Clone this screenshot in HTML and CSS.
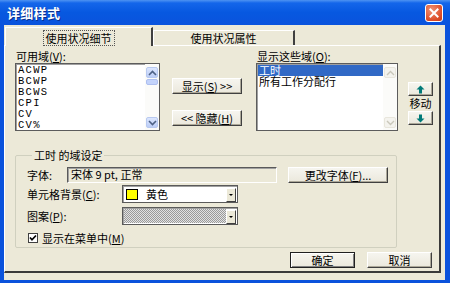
FILE: index.html
```html
<!DOCTYPE html>
<html lang="zh-CN">
<head>
    <meta charset="UTF-8">
    <title>详细样式</title>
    <link rel="stylesheet" href="styles.css">
</head>
<body>
    <div class="window">
        <div class="titlebar">
            <span class="title">详细样式</span>
            <span class="close">
                <svg width="18" height="18" viewBox="0 0 18 18">
                    <path d="M5 5 L13 13 M13 5 L5 13" stroke="#fff" stroke-width="2.2" stroke-linecap="square"/>
                </svg>
            </span>
        </div>

        <div class="client">
            <div class="tabs">
                <div class="tab active"><span class="focus">使用状况细节</span></div>
                <div class="tab">使用状况属性</div>
            </div>

            <div class="panel">
                <div class="fields">
                    <div class="col">
                        <div class="label">可用域(<u>V</u>):</div>
                        <div class="listbox">
                            <ul class="items mono">
                                <li>ACWP</li>
                                <li>BCWP</li>
                                <li>BCWS</li>
                                <li>CPI</li>
                                <li>CV</li>
                                <li>CV%</li>
                            </ul>
                            <div class="scrollbar">
                                <span class="sb-btn">
                                    <svg width="9" height="6" viewBox="0 0 9 6"><path d="M1 5 L4.5 1.5 L8 5" fill="none" stroke="#4d6185" stroke-width="1.6"/></svg>
                                </span>
                                <span class="sb-thumb"></span>
                                <span class="sb-track"></span>
                                <span class="sb-btn">
                                    <svg width="9" height="6" viewBox="0 0 9 6"><path d="M1 1 L4.5 4.5 L8 1" fill="none" stroke="#4d6185" stroke-width="1.6"/></svg>
                                </span>
                            </div>
                        </div>
                    </div>

                    <div class="mid">
                        <div class="btn">显示(<u>S</u>) &gt;&gt;</div>
                        <div class="btn">&lt;&lt; 隐藏(<u>H</u>)</div>
                    </div>

                    <div class="col">
                        <div class="label">显示这些域(<u>O</u>):</div>
                        <div class="listbox">
                            <ul class="items">
                                <li class="selected">工时</li>
                                <li>所有工作分配行</li>
                            </ul>
                            <div class="scrollbar disabled">
                                <span class="sb-btn">
                                    <svg width="9" height="6" viewBox="0 0 9 6"><path d="M1 5 L4.5 1.5 L8 5" fill="none" stroke="#c9c7ba" stroke-width="1.4"/></svg>
                                </span>
                                <span class="sb-track"></span>
                                <span class="sb-btn">
                                    <svg width="9" height="6" viewBox="0 0 9 6"><path d="M1 1 L4.5 4.5 L8 1" fill="none" stroke="#c9c7ba" stroke-width="1.4"/></svg>
                                </span>
                            </div>
                        </div>
                    </div>

                    <div class="move">
                        <div class="btn icon">
                            <svg width="9" height="9" viewBox="0 0 9 9"><path d="M4.5 0.5 L8.5 4.5 L6 4.5 L6 8.5 L3 8.5 L3 4.5 L0.5 4.5 Z" fill="#007a78"/></svg>
                        </div>
                        <div class="move-label">移动</div>
                        <div class="btn icon">
                            <svg width="9" height="9" viewBox="0 0 9 9"><path d="M4.5 8.5 L8.5 4.5 L6 4.5 L6 0.5 L3 0.5 L3 4.5 L0.5 4.5 Z" fill="#007a78"/></svg>
                        </div>
                    </div>
                </div>

                <fieldset class="group">
                    <legend>工时 的域设定</legend>

                    <div class="row font-row">
                        <span class="row-label short">字体:</span>
                        <span class="readonly">宋体 9 pt, 正常</span>
                        <div class="btn wide">更改字体(<u>F</u>)...</div>
                    </div>

                    <div class="row combo-row">
                        <span class="row-label">单元格背景(<u>C</u>):</span>
                        <div class="combo">
                            <span class="combo-value"><span class="swatch"></span>黄色</span>
                            <span class="combo-btn"><span class="caret"></span></span>
                        </div>
                    </div>

                    <div class="row combo-row pattern-row">
                        <span class="row-label">图案(<u>P</u>):</span>
                        <div class="combo">
                            <span class="combo-value pattern"></span>
                            <span class="combo-btn"><span class="caret"></span></span>
                        </div>
                    </div>

                    <div class="row check-row">
                        <span class="checkbox">
                            <svg width="8" height="8" viewBox="0 0 8 8"><path d="M1 3.5 L3 5.8 L7 1.5" fill="none" stroke="#000" stroke-width="1.7"/></svg>
                        </span>
                        <span>显示在菜单中(<u>M</u>)</span>
                    </div>
                </fieldset>

                <div class="footer">
                    <div class="btn action default">确定</div>
                    <div class="btn action">取消</div>
                </div>
            </div>
        </div>
    </div>
</body>
</html>
```

FILE: styles.css
```css
body {
    margin: 0;
    font-family: "Noto Sans CJK SC", "Noto Sans", sans-serif;
    font-size: 11px;
    color: #000;
    background: #fff;
}
u {
    text-decoration: underline;
    text-underline-offset: 1px;
}
.window {
    width: 450px;
    height: 283px;
    background: #0a52dc;
    display: flex;
    flex-direction: column;
}
.titlebar {
    height: 25px;
    display: flex;
    align-items: center;
    padding-left: 7px;
    background: linear-gradient(#4e93f2 0, #1466ea 3px, #0758e0 50%, #0a53dd 100%);
}
.title {
    color: #fff;
    font-weight: bold;
    font-size: 13px;
    letter-spacing: 0.3px;
    line-height: 16px;
    text-shadow: 1px 1px #0b2f8f;
}
.close {
    margin-left: auto;
    margin-right: 7px;
    width: 18px;
    height: 18px;
    border: 1px solid #fff;
    border-radius: 3px;
    box-sizing: border-box;
    background: radial-gradient(circle at 35% 30%, #f09275, #dc4b26 70%, #c53b17);
    display: flex;
    align-items: center;
    justify-content: center;
}
.close svg {
    width: 16px;
    height: 16px;
}
.client {
    flex: 1;
    margin: 0 5px 3px 4px;
    background: #ece9d8;
    display: flex;
    flex-direction: column;
}
.tabs {
    height: 20px;
    display: flex;
    align-items: flex-end;
    padding-left: 1px;
}
.tab {
    box-sizing: border-box;
    width: 142px;
    height: 15px;
    border-top: 1px solid #fff;
    border-left: 1px solid #fff;
    border-right: 2px solid #404040;
    display: flex;
    align-items: center;
    justify-content: center;
    line-height: 12px;
}
.tab.active {
    width: 148px;
    height: 19px;
    margin-bottom: -1px;
    position: relative;
    background: #ece9d8;
    padding-top: 1px;
}
.focus {
    outline: 1px dotted #555;
    outline-offset: 1px;
    padding: 0 1px;
}
.panel {
    box-sizing: border-box;
    width: 437px;
    height: 228px;
    border-top: 1px solid #fff;
    border-left: 1px solid #fff;
    border-right: 2px solid #3a3a3a;
    border-bottom: 2px solid #3a3a3a;
    padding: 5px 0 0 10px;
}
.fields {
    display: grid;
    grid-template-columns: 145px 70px 142px 25px;
    column-gap: 12px;
}
.fields .col:nth-child(3) {
    margin-left: 2px;
    margin-right: -2px;
}
.label {
    height: 11px;
    line-height: 11px;
    margin-bottom: 1px;
    margin-left: 1px;
}
.listbox {
    box-sizing: border-box;
    height: 68px;
    background: #fff;
    border: 1px solid #5c5c5c;
    box-shadow: inset 1px 1px #a0a0a0;
    display: flex;
}
.items {
    flex: 1;
    list-style: none;
    margin: 0;
    padding: 1px 0 0 1px;
    line-height: 11px;
}
.items.mono li {
    font-family: "Liberation Mono", monospace;
    font-size: 10.5px;
    letter-spacing: 1.3px;
}
.items li {
    height: 11px;
    padding-left: 1px;
}
.items li.selected {
    background: #3169c6;
    color: #fff;
}
.scrollbar {
    width: 14px;
    display: flex;
    flex-direction: column;
    padding: 3px 0 2px;
    background: #fbfbf9;
}
.sb-btn {
    height: 11px;
    border-radius: 2px;
    background: linear-gradient(#dbe6fe, #bccdf6);
    border: 1px solid #b8c9f0;
    box-sizing: border-box;
    display: flex;
    align-items: center;
    justify-content: center;
    margin: 0 1px;
}
.sb-thumb {
    height: 4px;
    margin: 1px 1px 0;
    border-radius: 2px;
    background: #c3d3fb;
    border: 1px solid #aebff0;
}
.sb-track {
    flex: 1;
}
.scrollbar.disabled .sb-btn {
    background: #f4f3ee;
    border-color: #e8e6dc;
}
.mid {
    display: flex;
    flex-direction: column;
    gap: 16px;
    padding-top: 27px;
}
.btn {
    box-sizing: border-box;
    height: 16px;
    display: flex;
    align-items: center;
    justify-content: center;
    line-height: 12px;
    background: linear-gradient(#f6f5ef, #ebe8dc);
    border: 1px solid;
    border-color: #fff #404040 #404040 #fff;
    box-shadow: inset -1px -1px #aca899;
    white-space: nowrap;
}
.move {
    display: flex;
    flex-direction: column;
    align-items: stretch;
    padding-top: 31px;
}
.btn.icon {
    height: 14px;
}
.move-label {
    height: 15px;
    line-height: 14px;
    margin: 0 -3px;
    text-align: center;
}
.group {
    box-sizing: border-box;
    width: 382px;
    margin: 18px 0 0;
    padding: 0 0 4px 11px;
    border: 1px solid #d0d0bf;
    border-radius: 2px;
}
.group legend {
    margin-left: 5px;
    padding: 0 2px;
    line-height: 12px;
    height: 12px;
}
.row {
    display: flex;
    align-items: center;
}
.font-row {
    height: 16px;
    margin-top: 6px;
}
.row-label {
    width: 95px;
    line-height: 12px;
}
.row-label.short {
    width: 40px;
}
.readonly {
    box-sizing: border-box;
    width: 210px;
    height: 16px;
    border: 1px solid;
    border-color: #5a5a5a #fff #fff #5a5a5a;
    box-shadow: inset 1px 1px #a0a0a0;
    padding-left: 3px;
    line-height: 13px;
}
.btn.wide {
    width: 100px;
    margin-left: 11px;
}
.combo-row {
    height: 18px;
    margin-top: 2px;
}
.pattern-row {
    margin-top: 4px;
}
.combo {
    box-sizing: border-box;
    width: 116px;
    height: 18px;
    display: flex;
    background: #fff;
    border: 1px solid #5a5a5a;
    box-shadow: inset 1px 1px #a0a0a0;
    padding: 1px;
}
.combo-value {
    flex: 1;
    display: flex;
    align-items: center;
    gap: 8px;
    padding-left: 2px;
    line-height: 12px;
}
.combo-value.pattern {
    background: repeating-conic-gradient(#9a9a9a 0 25%, #e2e2e2 0 50%) 0 0 / 2px 2px;
}
.swatch {
    width: 10px;
    height: 9px;
    background: #ffff00;
    border: 1px solid #000;
}
.combo-btn {
    box-sizing: border-box;
    width: 10px;
    height: 14px;
    margin-top: 1px;
    background: #ece9d8;
    border: 1px solid;
    border-color: #fff #404040 #404040 #fff;
    display: flex;
    align-items: center;
    justify-content: center;
}
.caret {
    width: 0;
    height: 0;
    border-left: 2px solid transparent;
    border-right: 2px solid transparent;
    border-top: 2px solid #000;
}
.check-row {
    height: 11px;
    margin-top: 7px;
    gap: 4px;
    line-height: 12px;
}
.checkbox {
    box-sizing: border-box;
    width: 10px;
    height: 10px;
    margin-left: 1px;
    background: #fff;
    border: 1px solid #404040;
    display: flex;
    align-items: center;
    justify-content: center;
}
.footer {
    display: flex;
    justify-content: flex-end;
    gap: 12px;
    margin-top: 4px;
    padding-right: 7px;
}
.btn.action {
    width: 65px;
}
.btn.default {
    border-color: #202020;
    box-shadow: inset 1px 1px #fff, inset -1px -1px #808080;
}
```
